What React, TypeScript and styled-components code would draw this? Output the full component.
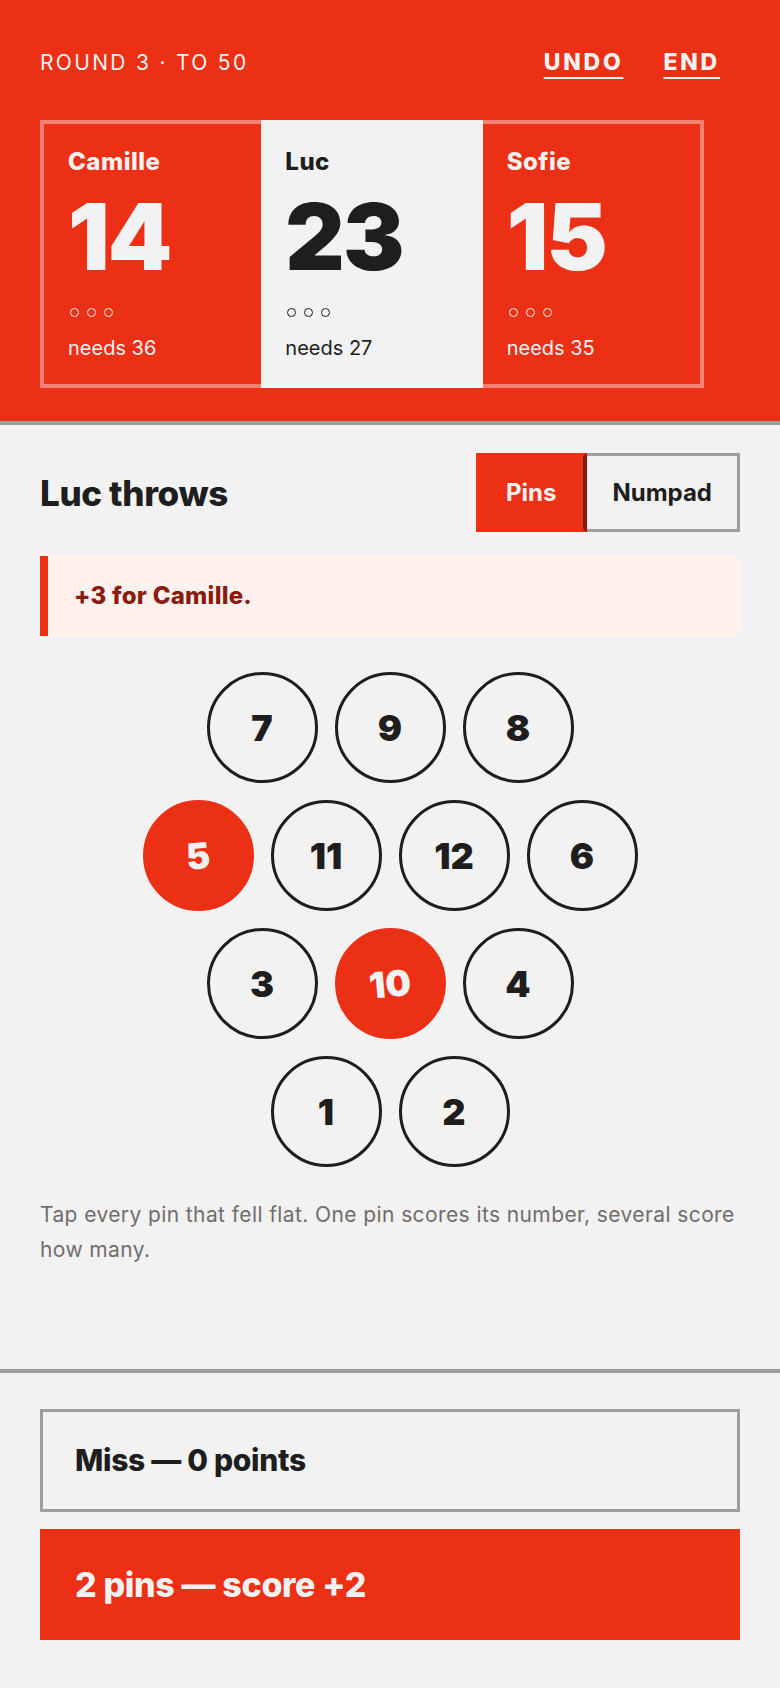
import styled, { createGlobalStyle } from 'styled-components';

const RED = '#ec3016';
const INK = '#1e1e1e';
const PAPER = '#f2f2f2';
const RULE = '#9e9e9e';

const GlobalStyle = createGlobalStyle`
  * { box-sizing: border-box; }
  html, body { margin: 0; padding: 0; }
  body {
    background: ${PAPER};
    color: ${INK};
    font-family: Inter, "Noto Sans", "Liberation Sans", sans-serif;
  }
  button { font-family: inherit; cursor: pointer; }
`;

const Page = styled.div`
  min-height: 100vh;
  display: flex;
  flex-direction: column;
`;

const Header = styled.header`
  background: ${RED};
  color: ${PAPER};
  padding: 44px 40px 33px;
  border-bottom: 4px solid ${RULE};
`;

const TopBar = styled.div`
  display: flex;
  align-items: center;
  justify-content: space-between;
  height: 36px;
`;

const RoundLabel = styled.div`
  font-size: 21px;
  letter-spacing: 0.11em;
  font-weight: 400;
`;

const Nav = styled.nav`
  display: flex;
`;

const NavButton = styled.button`
  background: none;
  border: 0;
  color: ${PAPER};
  padding: 0 20px;
  font-size: 23px;
  font-weight: 800;
  letter-spacing: 0.12em;
  text-decoration: underline;
  text-decoration-thickness: 2px;
  text-underline-offset: 7px;
`;

const Scoreboard = styled.div`
  display: grid;
  grid-template-columns: repeat(3, 1fr);
  width: 664px;
  margin-top: 40px;
`;

const Card = styled.div<{ $active: boolean; $first: boolean; $last: boolean }>`
  padding: 24px;
  border: 4px solid ${p => (p.$active ? PAPER : 'rgba(255, 255, 255, 0.4)')};
  border-left-width: ${p => (p.$first ? '4px' : '0')};
  border-right-width: ${p => (p.$last ? '4px' : '0')};
  background: ${p => (p.$active ? PAPER : 'transparent')};
  color: ${p => (p.$active ? INK : PAPER)};
  display: flex;
  flex-direction: column;
`;

const PlayerName = styled.div`
  font-size: 24px;
  line-height: 28px;
  font-weight: 800;
  letter-spacing: 0.02em;
`;

const Score = styled.div`
  font-size: 92px;
  line-height: 90px;
  font-weight: 900;
  letter-spacing: -0.02em;
  margin-top: 16px;
`;

const Dots = styled.div`
  display: flex;
  gap: 8px;
  margin: 26px 0 0 2px;
`;

const Dot = styled.span`
  width: 9px;
  height: 9px;
  border-radius: 50%;
  border: 1.5px solid currentColor;
`;

const Needs = styled.div`
  font-size: 20px;
  line-height: 24px;
  margin-top: 19px;
`;

const Main = styled.main`
  flex: 1;
  padding: 28px 40px 40px;
`;

const TurnRow = styled.div`
  display: flex;
  align-items: center;
  justify-content: space-between;
`;

const TurnTitle = styled.h1`
  margin: 0;
  font-size: 35px;
  font-weight: 800;
  letter-spacing: -0.01em;
`;

const Toggle = styled.div`
  display: flex;
`;

const ToggleButton = styled.button<{ $on: boolean; $first: boolean }>`
  height: 79px;
  padding: 0 ${p => (p.$first ? '27px' : '25px')};
  font-size: 24px;
  font-weight: 700;
  border: 3px solid ${p => (p.$on ? RED : RULE)};
  border-right-color: ${p => (p.$on ? '#8a1b0e' : RULE)};
  border-left-width: ${p => (p.$first ? '3px' : '0')};
  border-right-width: ${p => (p.$on ? '4px' : '3px')};
  background: ${p => (p.$on ? RED : PAPER)};
  color: ${p => (p.$on ? PAPER : INK)};
`;

const Notice = styled.div`
  margin-top: 24px;
  background: #fff1ee;
  border-left: 8px solid ${RED};
  padding: 26px 26px;
  font-size: 24px;
  line-height: 28px;
  font-weight: 800;
  letter-spacing: 0.01em;
  color: #8a1b0e;
`;

const PinDeck = styled.div`
  margin-top: 36px;
  display: flex;
  flex-direction: column;
  align-items: center;
  gap: 17px;
`;

const PinRow = styled.div`
  display: flex;
  gap: 17px;
`;

const Pin = styled.button<{ $down: boolean }>`
  width: 111px;
  height: 111px;
  border-radius: 50%;
  border: 3px solid ${p => (p.$down ? RED : INK)};
  background: ${p => (p.$down ? RED : 'transparent')};
  color: ${p => (p.$down ? PAPER : INK)};
  font-size: 36px;
  font-weight: 900;
  display: flex;
  align-items: center;
  justify-content: center;
  padding: 0;
`;

const PinNumber = styled.span<{ $down: boolean }>`
  display: inline-block;
  transform: rotate(${p => (p.$down ? '-5deg' : '0deg')});
`;

const Hint = styled.p`
  margin: 30px 0 0;
  font-size: 21px;
  line-height: 35px;
  letter-spacing: 0.4px;
  color: #716d6d;
`;

const Footer = styled.footer`
  border-top: 4px solid ${RULE};
  padding: 36px 40px 48px;
  display: flex;
  flex-direction: column;
  gap: 17px;
`;

const ActionButton = styled.button<{ $primary?: boolean }>`
  width: 100%;
  text-align: left;
  padding: 32px;
  border: 3px solid ${p => (p.$primary ? RED : RULE)};
  background: ${p => (p.$primary ? RED : 'transparent')};
  color: ${p => (p.$primary ? PAPER : INK)};
  font-size: ${p => (p.$primary ? '34px' : '30px')};
  line-height: ${p => (p.$primary ? '41px' : '33px')};
  font-weight: 800;
  letter-spacing: -0.01em;
`;

const players = [
  { name: 'Camille', score: 14, needs: 36 },
  { name: 'Luc', score: 23, needs: 27 },
  { name: 'Sofie', score: 15, needs: 35 },
];

const pinRows = [
  [7, 9, 8],
  [5, 11, 12, 6],
  [3, 10, 4],
  [1, 2],
];

const knocked = [5, 10];

export default function App() {
  const current = 1;
  return (
    <Page>
      <GlobalStyle />
      <Header>
        <TopBar>
          <RoundLabel>ROUND 3 · TO 50</RoundLabel>
          <Nav>
            <NavButton>UNDO</NavButton>
            <NavButton>END</NavButton>
          </Nav>
        </TopBar>
        <Scoreboard>
          {players.map((p, i) => (
            <Card
              key={p.name}
              $active={i === current}
              $first={i === 0}
              $last={i === players.length - 1}
            >
              <PlayerName>{p.name}</PlayerName>
              <Score>{p.score}</Score>
              <Dots>
                <Dot />
                <Dot />
                <Dot />
              </Dots>
              <Needs>needs {p.needs}</Needs>
            </Card>
          ))}
        </Scoreboard>
      </Header>

      <Main>
        <TurnRow>
          <TurnTitle>Luc throws</TurnTitle>
          <Toggle>
            <ToggleButton $on $first>
              Pins
            </ToggleButton>
            <ToggleButton $on={false} $first={false}>
              Numpad
            </ToggleButton>
          </Toggle>
        </TurnRow>

        <Notice>+3 for Camille.</Notice>

        <PinDeck>
          {pinRows.map((row, r) => (
            <PinRow key={r}>
              {row.map(n => {
                const down = knocked.includes(n);
                return (
                  <Pin key={n} $down={down}>
                    <PinNumber $down={down}>{n}</PinNumber>
                  </Pin>
                );
              })}
            </PinRow>
          ))}
        </PinDeck>

        <Hint>
          Tap every pin that fell flat. One pin scores its number, several score
          how many.
        </Hint>
      </Main>

      <Footer>
        <ActionButton>Miss — 0 points</ActionButton>
        <ActionButton $primary>2 pins — score +2</ActionButton>
      </Footer>
    </Page>
  );
}
